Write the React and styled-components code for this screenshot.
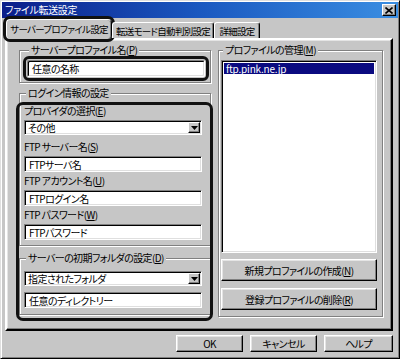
import React from 'react';
import styled, { createGlobalStyle } from 'styled-components';

const FONT = `"Noto Sans CJK JP", "Liberation Sans", sans-serif`;
const GRAY = '#c6c6c6';

const Global = createGlobalStyle`
  html, body { margin: 0; padding: 0; background: ${GRAY}; }
  body {
    font-family: ${FONT};
    font-size: 10px;
    font-feature-settings: "palt";
    letter-spacing: -0.6px;
    color: #000;
  }
  * { box-sizing: border-box; }
`;

const Window = styled.div`
  width: 400px;
  height: 359px;
  background: ${GRAY};
  border: 1px solid;
  border-color: #dfdfdf #000 #000 #dfdfdf;
  box-shadow: inset 1px 1px 0 #fff, inset -1px -1px 0 #808080;
  padding: 1px;
  display: flex;
  flex-direction: column;
`;

const TitleBar = styled.div`
  height: 16px;
  flex: none;
  display: flex;
  align-items: center;
  justify-content: space-between;
  background: linear-gradient(90deg, #0b1e8a 0%, #1a58c0 50%, #3a8ee2 100%);
  padding: 0 2px 0 3px;
  color: #fff;
  font-size: 10px;
  line-height: 16px;
  letter-spacing: -0.3px;
`;

const CloseBtn = styled.span`
  width: 14px;
  height: 12px;
  background: ${GRAY};
  border: 1px solid;
  border-color: #fff #000 #000 #fff;
  box-shadow: inset -1px -1px 0 #808080;
  display: flex;
  align-items: center;
  justify-content: center;
`;

const Body = styled.div`
  flex: 1;
  display: flex;
  flex-direction: column;
  padding: 0 5px 0 3px;
`;

const TabRow = styled.div`
  display: flex;
  align-items: flex-end;
  height: 19px;
  margin-top: 1px;
  padding-left: 1px;
  position: relative;
  z-index: 1;
`;

const Tab = styled.div`
  width: ${p => p.$w}px;
  height: ${p => (p.$active ? '20px' : '16px')};
  margin-bottom: ${p => (p.$active ? '-1px' : '0')};
  background: ${GRAY};
  border: 1px solid;
  border-bottom: none;
  border-color: #fff #000 transparent #fff;
  box-shadow: inset -1px 0 0 #808080;
  border-radius: 3px 3px 0 0;
  display: flex;
  align-items: center;
  justify-content: center;
  white-space: nowrap;
  overflow: hidden;
  line-height: 12px;
  font-size: 9.5px;
  letter-spacing: -0.7px;
  padding-bottom: ${p => (p.$active ? '2px' : '0')};
  ${p => p.$marked && `
    outline: 3px solid #111;
    outline-offset: 0px;
    border-radius: 4px;
  `}
`;

const Panel = styled.div`
  height: 293px;
  flex: none;
  border: 2px solid;
  border-color: #fff #000 #000 #fff;
  box-shadow: inset -1px -1px 0 #808080, inset 1px 1px 0 #e4e4e4;
  padding: 4px 8px 0 12px;
  display: grid;
  grid-template-columns: 192px 165px;
  column-gap: 7px;
  align-items: start;
`;

const Column = styled.div`
  position: relative;
  display: flex;
  flex-direction: column;
`;

const Group = styled.fieldset`
  margin: ${p => p.$mt || 0}px 0 0 0;
  min-inline-size: 0;
  border: 1px solid #808080;
  box-shadow: 1px 1px 0 #fff, inset 1px 1px 0 #fff;
  padding: ${p => p.$pad};
  display: flex;
  flex-direction: column;
`;

const Legend = styled.legend`
  padding: 0 2px;
  margin-left: 2px;
  line-height: 12px;
  height: 12px;
  background: ${GRAY};
  white-space: nowrap;
`;

const Label = styled.div`
  line-height: 12px;
  height: 12px;
  margin-top: ${p => p.$mt}px;
  white-space: nowrap;
`;

const TextBox = styled.div`
  height: ${p => p.$h || 16}px;
  margin-top: ${p => p.$mt || 0}px;
  background: #fff;
  border: 1px solid;
  border-color: #808080 #fff #fff #808080;
  box-shadow: inset 1px 1px 0 #000, inset -1px -1px 0 #dfdfdf;
  padding-left: 4px;
  display: flex;
  align-items: center;
  white-space: nowrap;
  ${p => p.$marked && `
    outline: 3px solid #111;
    outline-offset: 1px;
    border-radius: 2px;
  `}
`;

const Select = styled.div`
  height: 15px;
  margin-top: ${p => p.$mt || 0}px;
  background: #fff;
  border: 1px solid;
  border-color: #808080 #fff #fff #808080;
  box-shadow: inset 1px 1px 0 #000, inset -1px -1px 0 #dfdfdf;
  padding: 0 1px 0 3px;
  display: flex;
  align-items: center;
  white-space: nowrap;
`;

const DropBtn = styled.span`
  margin-left: auto;
  width: 12px;
  height: 11px;
  background: ${GRAY};
  border: 1px solid;
  border-color: #fff #000 #000 #fff;
  box-shadow: inset -1px -1px 0 #808080;
  display: flex;
  align-items: center;
  justify-content: center;
`;

const Mark = styled.div`
  position: absolute;
  left: -3px;
  top: 58px;
  width: 197px;
  height: 219px;
  border: 3px solid #111;
  border-radius: 7px;
  pointer-events: none;
`;

const ListBox = styled.div`
  height: 193px;
  background: #fff;
  border: 1px solid;
  border-color: #808080 #fff #fff #808080;
  box-shadow: inset 1px 1px 0 #000, inset -1px -1px 0 #dfdfdf;
  padding: 2px;
`;

const ListItem = styled.div`
  height: 11px;
  line-height: 11px;
  padding-left: 2px;
  letter-spacing: -0.2px;
  background: ${p => (p.$selected ? '#0a0a80' : 'transparent')};
  color: ${p => (p.$selected ? '#fff' : '#000')};
`;

const Button = styled.div`
  height: ${p => p.$h}px;
  width: ${p => (p.$w ? `${p.$w}px` : 'auto')};
  margin-top: ${p => p.$mt || 0}px;
  background: ${GRAY};
  border: 1px solid;
  border-color: #fff #000 #000 #fff;
  box-shadow: inset -1px -1px 0 #808080, inset 1px 1px 0 #e4e4e4;
  display: flex;
  align-items: center;
  justify-content: center;
  white-space: nowrap;
`;

const Footer = styled.div`
  display: flex;
  justify-content: flex-end;
  gap: 7px;
  margin-top: 4px;
`;

const Arrow = () => (
  <svg width="7" height="4" viewBox="0 0 7 4">
    <path d="M0 0h7L3.5 4z" fill="#000" />
  </svg>
);

const XIcon = () => (
  <svg width="8" height="7" viewBox="0 0 8 7">
    <path d="M0.5 0.5L7.5 6.5M7.5 0.5L0.5 6.5" stroke="#000" strokeWidth="1.6" />
  </svg>
);

export default function App() {
  return (
    <>
      <Global />
      <Window>
        <TitleBar>
          <span>ファイル転送設定</span>
          <CloseBtn><XIcon /></CloseBtn>
        </TitleBar>
        <Body>
          <TabRow>
            <Tab $active $marked $w={106}>サーバープロファイル設定</Tab>
            <Tab $w={102}>転送モード自動判別設定</Tab>
            <Tab $w={46}>詳細設定</Tab>
          </TabRow>
          <Panel>
            <Column>
              <Group $pad="4px 5px 5px 7px">
                <Legend>サーバープロファイル名(<u>P</u>)</Legend>
                <TextBox $h={17} $marked>任意の名称</TextBox>
              </Group>
              <Group $mt={4} $pad="0 8px 5px 4px">
                <Legend>ログイン情報の設定</Legend>
                <Label $mt={6}>プロバイダの選択(<u>E</u>)</Label>
                <Select $mt={3}>その他<DropBtn><Arrow /></DropBtn></Select>
                <Label $mt={6}>FTP サーバー名(<u>S</u>)</Label>
                <TextBox $mt={3}>FTPサーバ名</TextBox>
                <Label $mt={3}>FTP アカウント名(<u>U</u>)</Label>
                <TextBox $mt={3}>FTPログイン名</TextBox>
                <Label $mt={3}>FTP パスワード(<u>W</u>)</Label>
                <TextBox $mt={3}>FTPパスワード</TextBox>
              </Group>
              <Group $mt={6} $pad="0 8px 6px 4px">
                <Legend>サーバーの初期フォルダの設定(<u>D</u>)</Legend>
                <Select $mt={7}>指定されたフォルダ<DropBtn><Arrow /></DropBtn></Select>
                <TextBox $mt={6}>任意のディレクトリー</TextBox>
              </Group>
              <Mark />
            </Column>
            <Column>
              <Group $pad="4px 5px 6px 2px">
                <Legend>プロファイルの管理(<u>M</u>)</Legend>
                <ListBox>
                  <ListItem $selected>ftp.pink.ne.jp</ListItem>
                </ListBox>
                <Button $h={22} $mt={6}>新規プロファイルの作成(<u>N</u>)</Button>
                <Button $h={22} $mt={7}>登録プロファイルの削除(<u>R</u>)</Button>
              </Group>
            </Column>
          </Panel>
          <Footer>
            <Button $h={17} $w={67}>OK</Button>
            <Button $h={17} $w={67}>キャンセル</Button>
            <Button $h={17} $w={69}>ヘルプ</Button>
          </Footer>
        </Body>
      </Window>
    </>
  );
}
